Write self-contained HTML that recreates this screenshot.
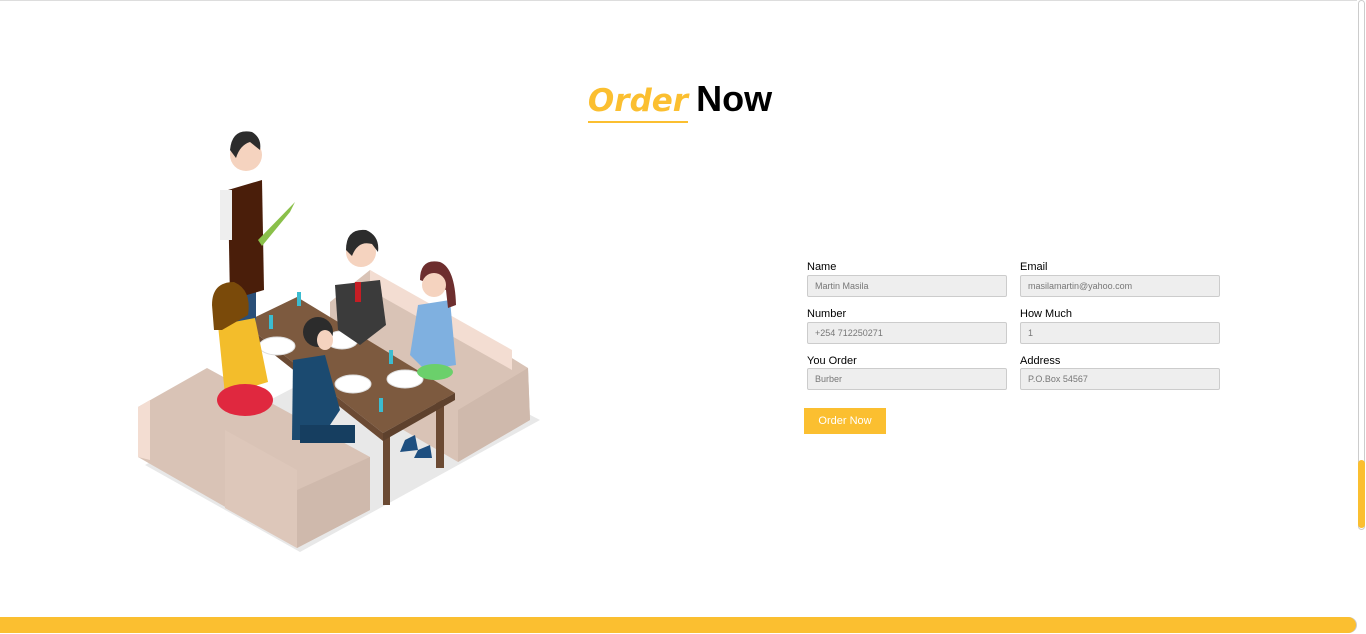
<!DOCTYPE html>
<html><head><meta charset="utf-8"><style>
html,body{margin:0;padding:0;width:1366px;height:634px;overflow:hidden;background:#fff;font-family:"Liberation Sans",Arial,sans-serif}
.top{position:absolute;left:0;top:0;width:1357px;height:1px;background:#ddd}
h1{position:absolute;left:0;width:1360px;top:78px;margin:0;text-align:center;font-size:36px;font-weight:bold;color:#000}
h1 span{font-family:"Comic Sans MS","DejaVu Sans",cursive;font-style:italic;color:#fbbf30;font-weight:bold;border-bottom:2px solid #fbbf30;display:inline-block;line-height:40px;font-size:31px;margin-right:8px}
.f{position:absolute;font-size:11px;color:#000}
.in{position:absolute;width:200px;height:22px;background:#eee;border:1px solid #ccc;border-radius:2px;font-size:9px;color:#777;line-height:21px;padding-left:7px;box-sizing:border-box}
.btn{position:absolute;left:804px;top:408px;width:82px;height:26px;background:#fbbf30;color:#fff;font-size:11px;text-align:center;line-height:26px}
.track{position:absolute;left:1358px;top:0;width:7px;height:530px;background:#fff;border:1px solid #ccc;border-radius:4px;box-sizing:border-box}
.thumb{position:absolute;left:1358px;top:460px;width:7px;height:68px;background:#fbbf30;border-radius:4px}
.hbar{position:absolute;left:0;top:617px;width:1356px;height:16px;background:#fbbf30;border-radius:0 8px 8px 0;box-shadow:1px 0 0 #ccc}
</style></head><body>
<div class="top"></div>
<h1><span>Order</span>Now</h1>
<svg width="560" height="600" style="position:absolute;left:0;top:0" viewBox="0 0 560 600">
<polygon points="145,465 300,552 540,420 385,340" fill="#e8e8e8"/>
<polygon points="330,302 370,270 528,368 530,420 458,462 330,387" fill="#d9c3b6"/>
<polygon points="370,270 512,350 512,370 370,290" fill="#f3ddd2"/>
<polygon points="458,410 528,368 530,420 458,462" fill="#cfb9ac"/>
<polygon points="383,433 383,505 390,505 390,433" fill="#6b4a33"/>
<polygon points="436,400 436,468 444,468 444,400" fill="#6b4a33"/>
<polygon points="243,323 297,297 455,393 383,433" fill="#7d5a3f"/>
<polygon points="243,323 383,433 383,441 243,330" fill="#6b4a33"/>
<polygon points="383,433 455,393 455,400 383,441" fill="#5e412d"/>
<ellipse cx="277" cy="346" rx="18" ry="9" fill="#fff" stroke="#ddd"/>
<ellipse cx="342" cy="340" rx="16" ry="9" fill="#fff" stroke="#ddd"/>
<ellipse cx="353" cy="384" rx="18" ry="9" fill="#fff" stroke="#ddd"/>
<ellipse cx="405" cy="379" rx="18" ry="9" fill="#fff" stroke="#ddd"/>
<g fill="#3bbcd0"><rect x="297" y="292" width="4" height="14"/><rect x="269" y="315" width="4" height="14"/><rect x="389" y="350" width="4" height="14"/><rect x="379" y="398" width="4" height="14"/></g>
<rect x="230" y="250" width="26" height="75" fill="#2a4f78"/>
<polygon points="228,190 262,180 264,290 230,300" fill="#4a1e0a"/>
<rect x="220" y="190" width="12" height="50" fill="#eee"/>
<polygon points="258,240 295,202 290,212 262,246" fill="#8ac04a"/>
<circle cx="246" cy="155" r="16" fill="#f5d3bf"/>
<path d="M230 150 Q232 128 252 132 Q262 138 260 150 L250 142 Q240 145 236 158Z" fill="#2c2c2c"/>
<polygon points="335,285 380,280 386,325 360,345 338,330" fill="#3b3b3b"/>
<rect x="355" y="282" width="6" height="20" fill="#c51d24"/>
<circle cx="361" cy="252" r="15" fill="#f5d3bf"/>
<path d="M346 250 Q346 228 366 230 Q380 236 378 252 L372 244 Q358 240 352 256Z" fill="#2c2c2c"/>
<polygon points="418,305 450,300 456,365 425,370 410,355" fill="#7fb0e0"/>
<ellipse cx="435" cy="372" rx="18" ry="8" fill="#6bd06b"/>
<path d="M420 280 Q420 258 440 262 Q455 268 456 305 L448 308 L446 290 Z" fill="#6d2e2e"/>
<circle cx="434" cy="285" r="12" fill="#f5d3bf"/>
<path d="M405 440 L415 435 L418 450 L400 452Z M418 450 L430 445 L432 458 L414 458Z" fill="#1e4f80"/>
<polygon points="138,407 207,368 370,457 370,510 297,548 138,457" fill="#d9c3b6"/>
<polygon points="138,407 150,400 150,460 138,457" fill="#f3ddd2"/>
<polygon points="225,430 297,470 297,548 225,508" fill="#ddc7ba"/>
<polygon points="297,490 370,457 370,510 297,548" fill="#cfb9ac"/>
<polygon points="218,325 255,318 268,382 225,395" fill="#f3bd2b"/>
<ellipse cx="245" cy="400" rx="28" ry="16" fill="#e0283f"/>
<path d="M212 305 Q212 282 234 282 Q252 290 248 315 L222 330 L214 330Z" fill="#7a4a0a"/>
<polygon points="293,360 325,355 340,410 320,440 292,440" fill="#1b4a70"/>
<rect x="300" y="425" width="55" height="18" fill="#163e60"/>
<circle cx="318" cy="332" r="15" fill="#2c2c2c"/>
<ellipse cx="325" cy="340" rx="8" ry="10" fill="#f5d3bf"/>
</svg>
<div class="f" style="left:807px;top:261px">Name</div>
<div class="f" style="left:1020px;top:261px">Email</div>
<div class="in" style="left:807px;top:275px">Martin Masila</div>
<div class="in" style="left:1020px;top:275px">masilamartin@yahoo.com</div>
<div class="f" style="left:807px;top:308px">Number</div>
<div class="f" style="left:1020px;top:308px">How Much</div>
<div class="in" style="left:807px;top:322px">+254 712250271</div>
<div class="in" style="left:1020px;top:322px">1</div>
<div class="f" style="left:807px;top:355px">You Order</div>
<div class="f" style="left:1020px;top:355px">Address</div>
<div class="in" style="left:807px;top:368px">Burber</div>
<div class="in" style="left:1020px;top:368px">P.O.Box 54567</div>
<div class="btn">Order Now</div>
<div class="track"></div><div class="thumb"></div>
<div class="hbar"></div>
</body></html>
